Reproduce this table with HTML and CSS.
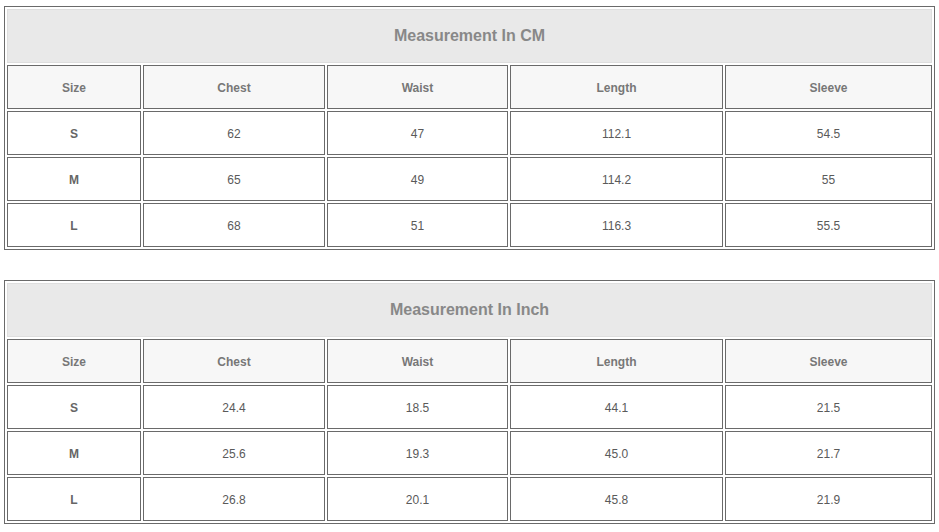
FILE: index.html
```html
<!DOCTYPE html>
<html lang="en">
<head>
<meta charset="utf-8">
<title>Size Chart</title>
<link rel="stylesheet" href="styles.css">
</head>
<body>
<div class="page">
  <div class="chart" role="table">
    <div class="title">Measurement In CM</div>
    <div class="cell head">Size</div><div class="cell head">Chest</div><div class="cell head">Waist</div><div class="cell head">Length</div><div class="cell head">Sleeve</div>
    <div class="cell key">S</div><div class="cell">62</div><div class="cell">47</div><div class="cell">112.1</div><div class="cell">54.5</div>
    <div class="cell key">M</div><div class="cell">65</div><div class="cell">49</div><div class="cell">114.2</div><div class="cell">55</div>
    <div class="cell key">L</div><div class="cell">68</div><div class="cell">51</div><div class="cell">116.3</div><div class="cell">55.5</div>
  </div>
  <div class="chart" role="table">
    <div class="title">Measurement In Inch</div>
    <div class="cell head">Size</div><div class="cell head">Chest</div><div class="cell head">Waist</div><div class="cell head">Length</div><div class="cell head">Sleeve</div>
    <div class="cell key">S</div><div class="cell">24.4</div><div class="cell">18.5</div><div class="cell">44.1</div><div class="cell">21.5</div>
    <div class="cell key">M</div><div class="cell">25.6</div><div class="cell">19.3</div><div class="cell">45.0</div><div class="cell">21.7</div>
    <div class="cell key">L</div><div class="cell">26.8</div><div class="cell">20.1</div><div class="cell">45.8</div><div class="cell">21.9</div>
  </div>
</div>
</body>
</html>
```

FILE: styles.css
```css
html, body {
  margin: 0;
  padding: 0;
  background: #ffffff;
}
.page {
  padding: 6px 0 0 4px;
  display: flex;
  flex-direction: column;
  gap: 30px;
  font-family: "Liberation Sans", Arial, sans-serif;
}
.chart {
  width: max-content;
  display: grid;
  grid-template-columns: 134px 182px 181px 213px 207px;
  grid-template-rows: 54px repeat(4, 44px);
  gap: 2px;
  padding: 2px;
  border: 1px solid #6a6a6a;
}
.title {
  grid-column: 1 / -1;
  box-sizing: border-box;
  border: 1px solid #dedede;
  background: #e9e9e9;
  color: #888888;
  font-weight: bold;
  font-size: 16px;
  display: flex;
  align-items: center;
  justify-content: center;
}
.cell {
  box-sizing: border-box;
  border: 1px solid #6a6a6a;
  padding-top: 2px;
  display: flex;
  align-items: center;
  justify-content: center;
  font-size: 12px;
  color: #5a5a5a;
  background: #ffffff;
}
.head {
  background: #f7f7f7;
  color: #777777;
  font-weight: bold;
}
.key {
  font-weight: bold;
  color: #666666;
}
```
